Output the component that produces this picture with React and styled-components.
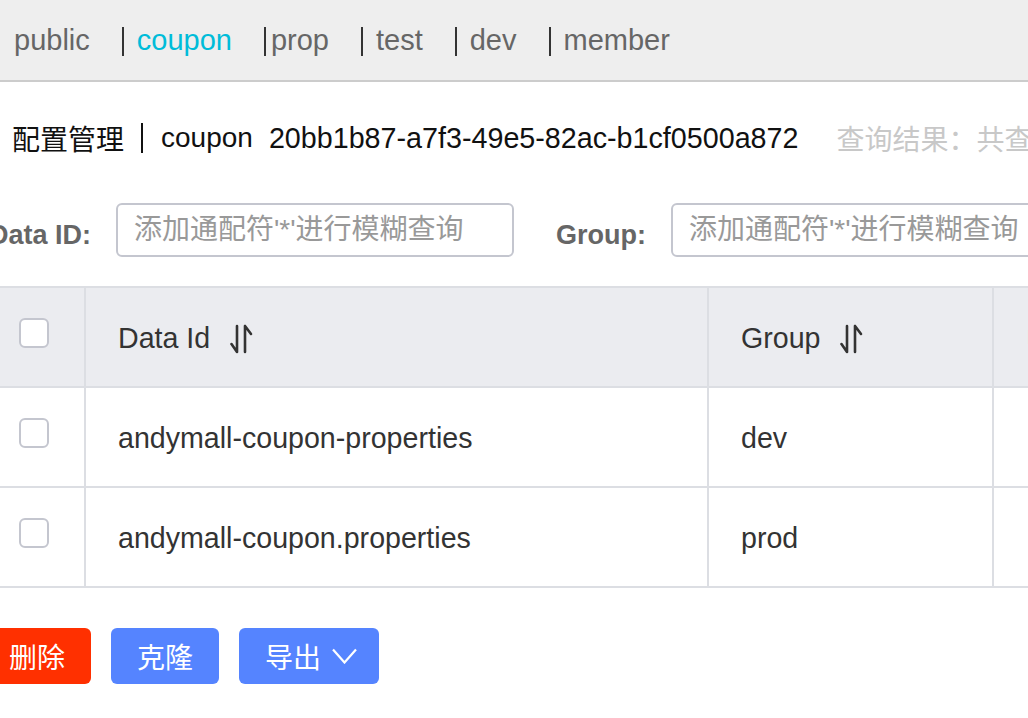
import React from "react";
import styled, { createGlobalStyle } from "styled-components";

const GlobalStyle = createGlobalStyle`
  html, body {
    margin: 0;
    padding: 0;
    background: #fff;
    overflow: hidden;
  }
  body {
    font-family: "Liberation Sans", Arial, "Noto Sans CJK SC", sans-serif;
  }
`;

const Page = styled.div`
  width: 1028px;
  height: 718px;
  overflow: hidden;
`;

// 顶部 namespace 切换
const NamespaceBar = styled.div`
  height: 80px;
  background: #eeeeee;
  border-bottom: 2px solid #cccccc;
  display: flex;
  align-items: center;
  padding-left: 14px;
  font-size: 29px;
  white-space: nowrap;
`;

const NsItem = styled.span`
  display: inline-flex;
  flex: none;
  align-items: center;
  margin-right: 32px;
`;

const NsLabel = styled.span`
  color: ${(p) => (p.active ? "#00bcd9" : "#666")};
`;

const NsBar = styled.span`
  display: inline-block;
  width: 2px;
  height: 29px;
  background: #333;
  margin-top: 2px;
  margin-right: ${(p) => (p.tight ? "5px" : "13px")};
`;

const TitleRow = styled.div`
  margin-top: 28px;
  height: 56px;
  padding-left: 12px;
  display: flex;
  align-items: center;
  white-space: nowrap;
  overflow: hidden;
  font-size: 28px;
  color: #111;
  & > * {
    flex: none;
  }
`;

const TitleSep = styled.span`
  display: inline-block;
  width: 2px;
  height: 30px;
  background: #111;
  margin: 0 18px 0 17px;
`;

const NsId = styled.span`
  margin-left: 16px;
  font-size: 28.7px;
`;

const ResultText = styled.span`
  margin-left: 38px;
  color: #c8c8c8;
`;

const SearchRow = styled.div`
  margin-top: 37px;
  margin-left: -11px;
  height: 54px;
  display: flex;
  align-items: center;
  white-space: nowrap;
`;

const SearchLabel = styled.label`
  flex: none;
  font-size: 27px;
  font-weight: bold;
  color: #666;
  margin-left: ${(p) => p.offset || 0}px;
  margin-right: 25px;
  padding-top: 10px;
`;

const SearchInput = styled.input`
  box-sizing: border-box;
  flex: none;
  width: ${(p) => p.w}px;
  height: 54px;
  border: 2px solid #c4c6cf;
  border-radius: 6px;
  padding: 0 16px;
  font-size: 28px;
  font-family: "Liberation Sans", Arial, "Noto Sans CJK SC", sans-serif;
  color: #333;
  outline: none;
  &::placeholder {
    color: #999;
  }
`;

const Table = styled.div`
  margin-top: 29px;
  border-top: 2px solid #dcdee3;
  width: 1028px;
  overflow: hidden;
`;

const Row = styled.div`
  display: grid;
  grid-template-columns: 86px 623px 285px 400px;
  height: 100px;
  box-sizing: border-box;
  border-bottom: 2px solid #dcdee3;
  background: ${(p) => (p.head ? "#ebecf0" : "#fff")};
`;

const Cell = styled.div`
  box-sizing: border-box;
  border-right: 2px solid #dcdee3;
  display: flex;
  align-items: center;
  padding-left: 32px;
  padding-top: 2px;
  font-size: 28.6px;
  color: #333;
  white-space: nowrap;
`;

const CheckCell = styled(Cell)`
  padding-left: 19px;
  padding-top: 0;
  padding-bottom: 8px;
`;

const CheckBox = styled.span`
  display: inline-block;
  box-sizing: border-box;
  width: 30px;
  height: 30px;
  border: 2px solid #c4c6cf;
  border-radius: 6px;
  background: #fff;
`;

const SortIcon = styled.svg`
  margin-left: 20px;
  margin-top: 2px;
`;

const ButtonRow = styled.div`
  margin-top: 40px;
  margin-left: -17px;
  display: flex;
  gap: 20px;
`;

const Btn = styled.button`
  height: 56px;
  padding: 0 ${(p) => (p.dropdown ? "22px" : "26px")} 0 26px;
  border: none;
  border-radius: 6px;
  background: ${(p) => (p.danger ? "#ff3000" : "#5584ff")};
  color: #fff;
  font-size: 28px;
  font-family: "Liberation Sans", Arial, "Noto Sans CJK SC", sans-serif;
  display: inline-flex;
  align-items: center;
  gap: 11px;
  cursor: pointer;
`;

const Sort = () => (
  <SortIcon width="24" height="30" viewBox="0 0 24 30" fill="none" stroke="#333" strokeWidth="2.6" strokeLinecap="round">
    <path d="M7 2v26M7 28L1.5 20" />
    <path d="M15 2v26M15 2l6 8" />
  </SortIcon>
);

const namespaces = [
  { name: "coupon", active: true },
  { name: "prop", tight: true },
  { name: "test" },
  { name: "dev" },
  { name: "member" },
];

const configs = [
  { dataId: "andymall-coupon-properties", group: "dev" },
  { dataId: "andymall-coupon.properties", group: "prod" },
];

export default function App() {
  return (
    <Page>
      <GlobalStyle />
      <NamespaceBar>
        <NsItem>
          <NsLabel>public</NsLabel>
        </NsItem>
        {namespaces.map((ns) => (
          <NsItem key={ns.name}>
            <NsBar tight={ns.tight} />
            <NsLabel active={ns.active}>{ns.name}</NsLabel>
          </NsItem>
        ))}
      </NamespaceBar>

      <TitleRow>
        <span>配置管理</span>
        <TitleSep />
        <span>coupon</span>
        <NsId>20bb1b87-a7f3-49e5-82ac-b1cf0500a872</NsId>
        <ResultText>查询结果：共查询到 2 条满足要求的配置。</ResultText>
      </TitleRow>

      <SearchRow>
        <SearchLabel>Data ID:</SearchLabel>
        <SearchInput w={398} placeholder="添加通配符'*'进行模糊查询" />
        <SearchLabel offset={42}>Group:</SearchLabel>
        <SearchInput w={398} placeholder="添加通配符'*'进行模糊查询" />
      </SearchRow>

      <Table>
        <Row head>
          <CheckCell>
            <CheckBox />
          </CheckCell>
          <Cell>
            Data Id
            <Sort />
          </Cell>
          <Cell>
            Group
            <Sort />
          </Cell>
          <Cell>归属应用:</Cell>
        </Row>
        {configs.map((c) => (
          <Row key={c.dataId}>
            <CheckCell>
              <CheckBox />
            </CheckCell>
            <Cell>{c.dataId}</Cell>
            <Cell>{c.group}</Cell>
            <Cell />
          </Row>
        ))}
      </Table>

      <ButtonRow>
        <Btn danger>删除</Btn>
        <Btn>克隆</Btn>
        <Btn dropdown>
          导出
          <svg width="25" height="16" viewBox="0 0 25 16" fill="none" stroke="#fff" strokeWidth="2.2">
            <path d="M1 1.5l11.5 13L24 1.5" />
          </svg>
        </Btn>
      </ButtonRow>
    </Page>
  );
}
